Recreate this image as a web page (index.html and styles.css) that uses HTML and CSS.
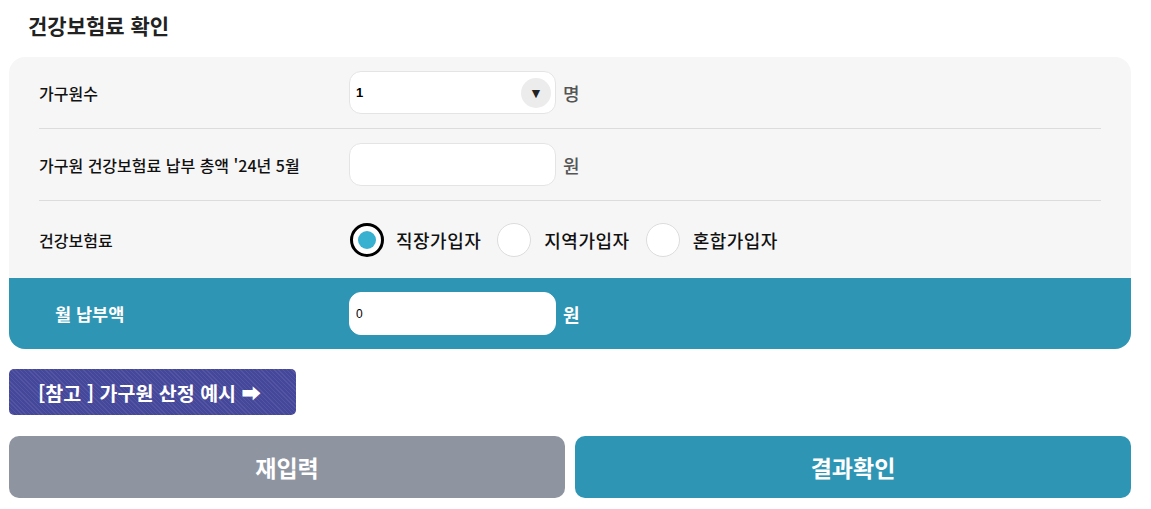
FILE: index.html
```html
<!DOCTYPE html>
<html lang="ko">
<head>
    <meta charset="UTF-8">
    <meta name="viewport" content="width=device-width, initial-scale=1.0">
    <title>건강보험료 확인</title>
    <link rel="stylesheet" href="styles.css">
</head>
<body>
    <div id="wrap">
        <h2 class="tit">건강보험료 확인</h2>

        <div class="box">
            <div class="row">
                <p class="lbl">가구원수</p>
                <div class="fld">
                    <div class="cxTexto sel">
                        <span>1</span>
                        <span class="arrow">&#9660;</span>
                    </div>
                    <span class="unit">명</span>
                </div>
            </div>
            <div class="row">
                <p class="lbl">가구원 건강보험료 납부 총액 '24년 5월</p>
                <div class="fld">
                    <input type="text" class="cxTexto">
                    <span class="unit">원</span>
                </div>
            </div>
            <div class="row last">
                <p class="lbl">건강보험료</p>
                <div class="fld radios">
                    <label class="rd"><span class="dot on"></span>직장가입자</label>
                    <label class="rd"><span class="dot"></span>지역가입자</label>
                    <label class="rd"><span class="dot"></span>혼합가입자</label>
                </div>
            </div>
            <div class="row total">
                <p class="lbl">월 납부액</p>
                <div class="fld">
                    <input type="text" class="cxTexto" value="0">
                    <span class="unit">원</span>
                </div>
            </div>
        </div>

        <button class="botaoRef">[참고 ] 가구원 산정 예시 &#10145;</button>

        <div class="btns">
            <button class="botao reset">재입력</button>
            <button class="botao ok">결과확인</button>
        </div>
    </div>
</body>
</html>
```
FILE: styles.css
```css
@charset "utf-8";

*{
    padding: 0px;
    margin: 0px;
    box-sizing: border-box;
}
body{
    background-color: #fff;
    font-family: "Noto Sans CJK KR", "Noto Sans", sans-serif;
    color: #111;
}
#wrap{
    width: 1122px;
    margin-left: 9px;
}
.tit{
    font-size: 21px;
    font-weight: 700;
    color: #222;
    padding: 10px 0 0 19px;
    height: 57px;
}
.box{
    background-color: #f6f6f6;
    border-radius: 16px;
    overflow: hidden;
}
.row{
    display: flex;
    align-items: center;
    height: 72px;
    margin: 0 30px;
    border-bottom: 1px solid #dcdcdc;
}
.row.last{
    height: 77px;
    border-bottom: none;
}
.row.total{
    margin: 0;
    padding-left: 30px;
    height: 71px;
    background-color: #2e96b4;
    border-bottom: none;
}
.lbl{
    width: 310px;
    font-size: 16px;
    font-weight: 500;
}
.total .lbl{
    color: #fff;
    font-weight: 700;
    font-size: 17.5px;
    padding-left: 16px;
}
.fld{
    display: flex;
    align-items: center;
    gap: 7px;
}
.cxTexto{
    width: 207px;
    height: 43px;
    background-color: #fff;
    border: 1px solid #e4e4e4;
    border-radius: 12px;
    padding: 0 6px;
    font-family: "Liberation Sans", Arial, sans-serif;
    font-size: 13px;
    color: #000;
    outline: none;
}
.sel{
    display: flex;
    align-items: center;
    justify-content: space-between;
    padding-right: 4px;
    font-weight: 700;
}
.arrow{
    width: 30px;
    height: 30px;
    border-radius: 50%;
    background-color: #ececec;
    display: flex;
    align-items: center;
    justify-content: center;
    font-size: 14px;
    color: #222;
}
.unit{
    font-size: 18px;
    color: #555;
    font-weight: 500;
}
.total .cxTexto{
    border-color: #fff;
    font-size: 12px;
}
.total .unit{
    color: #fff;
    font-weight: 700;
}
.radios{
    gap: 0;
    margin-left: 1px;
}
.rd{
    display: flex;
    align-items: center;
    font-size: 18px;
    letter-spacing: 0.5px;
    font-weight: 500;
    color: #111;
    margin-right: 16px;
}
.dot{
    width: 34px;
    height: 34px;
    border-radius: 50%;
    background-color: #fff;
    border: 1px solid #dcdcdc;
    margin-right: 13px;
    display: flex;
    align-items: center;
    justify-content: center;
}
.dot.on{
    border: 3px solid #000;
    margin-right: 12px;
}
.dot.on::after{
    content: "";
    width: 18px;
    height: 18px;
    border-radius: 50%;
    background-color: #38b0d0;
}
.botaoRef{
    margin-top: 20px;
    width: 287px;
    height: 46px;
    border: none;
    border-radius: 5px;
    background-color: #45479a;
    background-image: repeating-linear-gradient(45deg, rgba(255,255,255,0.08) 0px, rgba(255,255,255,0.08) 1px, transparent 1px, transparent 3px);
    color: #fff;
    font-family: "Noto Sans CJK KR", sans-serif;
    font-size: 19.5px;
    font-weight: 700;
    text-align: left;
    padding-left: 29px;
}
.btns{
    display: flex;
    gap: 10px;
    margin-top: 21px;
}
.botao{
    flex: 1;
    height: 62px;
    border: none;
    border-radius: 10px;
    color: #fff;
    font-family: "Noto Sans CJK KR", sans-serif;
    font-size: 23px;
    font-weight: 700;
}
.reset{
    background-color: #8e95a1;
}
.ok{
    background-color: #2e96b4;
}
```
